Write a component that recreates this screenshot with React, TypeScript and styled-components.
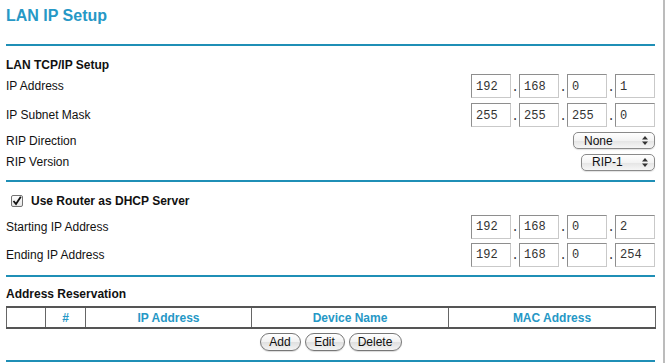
import React from 'react';
import styled, { createGlobalStyle } from 'styled-components';

const GlobalStyle = createGlobalStyle`
  html, body {
    margin: 0;
    padding: 0;
    background: #fff;
  }
  body {
    font-family: "Liberation Sans", Arial, Helvetica, sans-serif;
    color: #111;
  }
`;

const BLUE_TEXT = '#2698c6';
const BLUE_RULE = '#1f8fb6';

const Page = styled.div`
  width: 649px;
  min-height: 363px;
  padding: 0 8px 0 6px;
  border-right: 2px solid #bcbcbc;
`;

const Title = styled.h1`
  margin: 0;
  height: 44px;
  box-sizing: border-box;
  padding-top: 7px;
  font-size: 16px;
  line-height: 18px;
  font-weight: bold;
  color: ${BLUE_TEXT};
`;

const Rule = styled.div<{ $mt?: number }>`
  height: 2px;
  margin-top: ${({ $mt }) => $mt ?? 0}px;
  background: ${BLUE_RULE};
`;

const SectionHead = styled.div<{ $h: number; $pb: number }>`
  height: ${({ $h }) => $h}px;
  box-sizing: border-box;
  padding-bottom: ${({ $pb }) => $pb}px;
  display: flex;
  align-items: flex-end;
  font-size: 12px;
  line-height: 14px;
  font-weight: bold;
`;

const Row = styled.div<{ $h: number; $mt?: number }>`
  height: ${({ $h }) => $h}px;
  margin-top: ${({ $mt }) => $mt ?? 0}px;
  display: flex;
  align-items: center;
  justify-content: space-between;
  font-size: 12px;
  line-height: 14px;
`;

const Label = styled.span`
  color: #111;
`;

const IpGroup = styled.div`
  display: flex;
  align-items: center;
`;

const IpBox = styled.input`
  width: 40px;
  height: 24px;
  box-sizing: border-box;
  margin: 0;
  padding: 1px 0 0 4px;
  border: 1px solid;
  border-color: #8e8e8e #c9c9c9 #c9c9c9 #8e8e8e;
  font-family: "Liberation Mono", "Courier New", monospace;
  font-size: 12px;
  color: #333;
  background: #fff;
  outline: none;
`;

const Dot = styled.span`
  width: 8px;
  text-align: center;
  font-family: "Liberation Mono", "Courier New", monospace;
  font-size: 12px;
  line-height: 24px;
  padding-top: 3px;
  color: #333;
`;

const Popup = styled.div<{ $w: number }>`
  width: ${({ $w }) => $w}px;
  height: 17px;
  box-sizing: border-box;
  padding: 0 6px 0 10px;
  display: flex;
  align-items: center;
  justify-content: space-between;
  border: 1px solid #8a8a8a;
  border-radius: 5px;
  background: linear-gradient(#ffffff, #f3f3f3 50%, #e4e4e4 52%, #f6f6f6);
  box-shadow: 0 1px 1px rgba(0, 0, 0, 0.12);
  font-size: 12px;
  color: #111;
`;

const CheckRow = styled(Row)`
  justify-content: flex-start;
  padding-left: 5px;
  gap: 8px;
  font-weight: bold;
`;

const CheckBox = styled.span`
  width: 12px;
  height: 12px;
  box-sizing: border-box;
  border: 1px solid #737373;
  border-radius: 2px;
  background: linear-gradient(#fdfdfd, #e6e6e6);
  display: flex;
  align-items: center;
  justify-content: center;
`;

const Table = styled.table`
  width: 100%;
  border-collapse: collapse;
  table-layout: fixed;
  border: 1px solid #555;
  border-top-width: 2px;
  border-bottom-width: 2px;
`;

const Th = styled.th`
  height: 19px;
  padding: 0;
  border: 1px solid #666;
  font-size: 12px;
  font-weight: bold;
  color: ${BLUE_TEXT};
  text-align: center;
`;

const ButtonRow = styled.div`
  margin-top: 4px;
  display: flex;
  justify-content: center;
  gap: 4px;
`;

const PillButton = styled.button<{ $w: number }>`
  width: ${({ $w }) => $w}px;
  height: 18px;
  padding: 0;
  border: 1px solid #777;
  border-radius: 9px;
  background: linear-gradient(#ffffff, #f1f1f1 50%, #e0e0e0 52%, #f4f4f4);
  box-shadow: 0 1px 1px rgba(0, 0, 0, 0.15);
  font-family: "Liberation Sans", Arial, sans-serif;
  font-size: 12px;
  color: #111;
`;

const Arrows = () => (
  <svg width="6" height="9" viewBox="0 0 6 9">
    <path d="M3 0 L6 3.5 L0 3.5 Z" fill="#333" />
    <path d="M3 9 L6 5.5 L0 5.5 Z" fill="#333" />
  </svg>
);

const IpInput: React.FC<{ parts: string[] }> = ({ parts }) => (
  <IpGroup>
    {parts.map((p, i) => (
      <React.Fragment key={i}>
        {i > 0 && <Dot>.</Dot>}
        <IpBox defaultValue={p} />
      </React.Fragment>
    ))}
  </IpGroup>
);

const App: React.FC = () => (
  <>
    <GlobalStyle />
    <Page>
      <Title>LAN IP Setup</Title>
      <Rule />

      <SectionHead $h={26} $pb={0}>LAN TCP/IP Setup</SectionHead>
      <Row $h={28}>
        <Label>IP Address</Label>
        <IpInput parts={['192', '168', '0', '1']} />
      </Row>
      <Row $h={30}>
        <Label>IP Subnet Mask</Label>
        <IpInput parts={['255', '255', '255', '0']} />
      </Row>
      <Row $h={21}>
        <Label>RIP Direction</Label>
        <Popup $w={82}>
          <span>None</span>
          <Arrows />
        </Popup>
      </Row>
      <Row $h={22}>
        <Label>RIP Version</Label>
        <Popup $w={74}>
          <span>RIP-1</span>
          <Arrows />
        </Popup>
      </Row>
      <Rule $mt={7} />

      <CheckRow $h={24} $mt={7}>
        <CheckBox>
          <svg width="10" height="10" viewBox="0 0 10 10">
            <path d="M1.5 5 L4 8 L8.8 0.8" fill="none" stroke="#111" strokeWidth="1.8" />
          </svg>
        </CheckBox>
        <span>Use Router as DHCP Server</span>
      </CheckRow>
      <Row $h={27}>
        <Label>Starting IP Address</Label>
        <IpInput parts={['192', '168', '0', '2']} />
      </Row>
      <Row $h={29}>
        <Label>Ending IP Address</Label>
        <IpInput parts={['192', '168', '0', '254']} />
      </Row>
      <Rule $mt={6} />

      <SectionHead $h={29} $pb={5}>Address Reservation</SectionHead>
      <Table>
        <colgroup>
          <col style={{ width: 39 }} />
          <col style={{ width: 40 }} />
          <col style={{ width: 166 }} />
          <col style={{ width: 197 }} />
          <col style={{ width: 207 }} />
        </colgroup>
        <thead>
          <tr>
            <Th />
            <Th>#</Th>
            <Th>IP Address</Th>
            <Th>Device Name</Th>
            <Th>MAC Address</Th>
          </tr>
        </thead>
      </Table>
      <ButtonRow>
        <PillButton $w={41}>Add</PillButton>
        <PillButton $w={40}>Edit</PillButton>
        <PillButton $w={53}>Delete</PillButton>
      </ButtonRow>
      <Rule $mt={9} />
    </Page>
  </>
);

export default App;
